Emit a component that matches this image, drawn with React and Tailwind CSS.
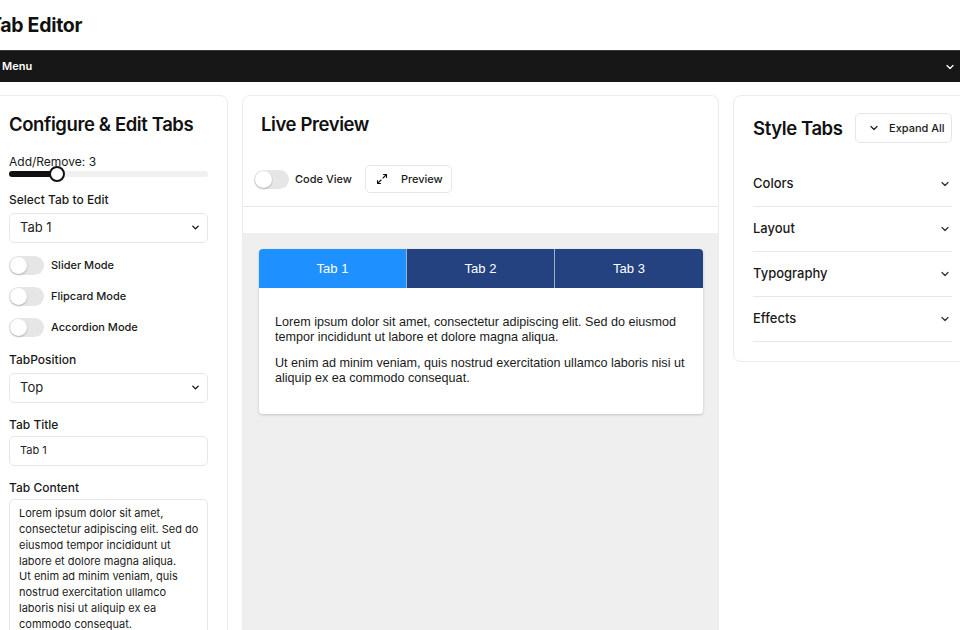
import React from "react";
import { ChevronDown, Maximize2 } from "lucide-react";

function Toggle() {
  return (
    <div className="w-[35px] h-[19px] rounded-full bg-[#e6e6e6] flex items-center px-[1px] shrink-0">
      <div className="w-[17px] h-[17px] rounded-full bg-white shadow-[0_1px_2px_rgba(0,0,0,0.25)]" />
    </div>
  );
}

function SelectBox({ value }) {
  return (
    <div className="h-[30px] w-full rounded-[5px] border border-[#e7e7e7] flex items-center justify-between pl-[10px] pr-[6px] text-[13px] text-[#222]">
      <span>{value}</span>
      <ChevronDown size={11} strokeWidth={3} className="text-[#111]" />
    </div>
  );
}

function AccordionRow({ label }) {
  return (
    <div className="h-[45px] border-b border-[#e8e8e8] flex items-center justify-between text-[13px] font-medium text-[#1a1a1a]">
      <span>{label}</span>
      <ChevronDown size={12} strokeWidth={2.5} className="text-[#333] mr-[1px]" />
    </div>
  );
}

export default function App() {
  return (
    <div className="w-[960px] h-[630px] overflow-hidden bg-white font-['Inter',sans-serif] text-[#111]">
      <div className="ml-[-11px] w-[983px]">
        <div className="h-[50px] pt-[2px] flex items-center">
          <h1 className="text-[19.5px] font-bold tracking-[-0.3px] text-[#111]">Tab Editor</h1>
        </div>
        <div className="h-[32px] bg-[#171717] border-t border-[#3a3a3a] flex items-center justify-between pl-[13px] pr-[16px]">
          <span className="text-[11px] font-semibold text-white">Menu</span>
          <ChevronDown size={12} strokeWidth={2.5} className="text-white" />
        </div>

        <div className="grid grid-cols-[239px_477px_239px] gap-[14px] mt-[13px] items-start">
          {/* Left panel */}
          <div className="h-[560px] rounded-[8px] border border-[#ececec] px-[19px] pt-[14px] flex flex-col">
            <h2 className="text-[18.5px] leading-[28px] font-semibold tracking-[-0.4px]">Configure &amp; Edit Tabs</h2>
            <div className="mt-[17px] text-[12px] leading-[14px] text-[#1a1a1a]">Add/Remove: 3</div>
            <div className="relative h-[10px] flex items-center">
              <div className="w-full h-[6px] rounded-full bg-[#f1f1f1]" />
              <div className="absolute left-0 top-[2px] h-[6px] w-[48px] rounded-l-full bg-[#111]" />
              <div className="absolute left-[40px] top-[-3px] w-[16px] h-[16px] rounded-full bg-white border-2 border-[#111]" />
            </div>
            <div className="mt-[14px] text-[12px] leading-[14px] font-medium text-[#1a1a1a]">Select Tab to Edit</div>
            <div className="mt-[6px]"><SelectBox value="Tab 1" /></div>
            <div className="mt-[13px] flex flex-col gap-[12px]">
              {["Slider Mode", "Flipcard Mode", "Accordion Mode"].map((l) => (
                <div key={l} className="h-[19px] flex items-center gap-[7px]">
                  <Toggle />
                  <span className="text-[11px] font-medium text-[#1a1a1a]">{l}</span>
                </div>
              ))}
            </div>
            <div className="mt-[16px] text-[12px] leading-[14px] font-medium text-[#1a1a1a]">TabPosition</div>
            <div className="mt-[6px]"><SelectBox value="Top" /></div>
            <div className="mt-[15px] text-[12px] leading-[14px] font-medium text-[#1a1a1a]">Tab Title</div>
            <div className="mt-[4px] h-[31px] rounded-[5px] border border-[#e7e7e7] flex items-center pl-[10px] text-[11px] text-[#222]">Tab 1</div>
            <div className="mt-[15px] text-[12px] leading-[14px] font-medium text-[#1a1a1a]">Tab Content</div>
            <div className="mt-[4px] h-[160px] rounded-[5px] border border-[#e7e7e7] pl-[9px] pr-[4px] pt-[6px] text-[11px] leading-[15.9px] text-[#222]">
              Lorem ipsum dolor sit amet, consectetur adipiscing elit. Sed do eiusmod tempor incididunt ut labore et dolore magna aliqua.
              <br />
              Ut enim ad minim veniam, quis nostrud exercitation ullamco laboris nisi ut aliquip ex ea commodo consequat.
            </div>
          </div>

          {/* Middle panel */}
          <div className="h-[560px] rounded-[8px] border border-[#ececec] flex flex-col overflow-hidden">
            <div className="h-[110px] flex flex-col">
              <h2 className="pl-[18px] pt-[14px] text-[18.5px] leading-[28px] font-semibold tracking-[-0.4px]">Live Preview</h2>
              <div className="mt-[27px] pl-[11px] flex items-center">
                <Toggle />
                <span className="ml-[6px] text-[11px] font-medium text-[#1a1a1a]">Code View</span>
                <div className="ml-[13px] h-[28px] w-[87px] rounded-[5px] border border-[#e7e7e7] flex items-center pl-[10px]">
                  <Maximize2 size={12} strokeWidth={2.2} className="text-[#111]" />
                  <span className="ml-[13px] text-[11px] font-medium text-[#1a1a1a]">Preview</span>
                </div>
              </div>
            </div>
            <div className="flex-1 border-t border-[#e8e8e8] flex flex-col">
              <div className="h-[26px] bg-white" />
              <div className="flex-1 bg-[#efefef] pl-[16px] pr-[15px] pt-[16px]">
                <div className="rounded-[4px] bg-white shadow-[0_1px_3px_rgba(0,0,0,0.18)] font-['Liberation_Sans',Arial,sans-serif]">
                  <div className="grid grid-cols-3 h-[39px] rounded-t-[4px] overflow-hidden text-[13px] text-white">
                    <div className="bg-[#1e90ff] flex items-center justify-center border-r border-[#9fb0cc]">Tab 1</div>
                    <div className="bg-[#24427f] flex items-center justify-center border-r border-[#9fb0cc]">Tab 2</div>
                    <div className="bg-[#24427f] flex items-center justify-center">Tab 3</div>
                  </div>
                  <div className="px-[16px] pt-[27px] pb-[29px] text-[12.6px] leading-[14.5px] text-[#1a1a1a]">
                    <p>Lorem ipsum dolor sit amet, consectetur adipiscing elit. Sed do eiusmod tempor incididunt ut labore et dolore magna aliqua.</p>
                    <p className="mt-[12px]">Ut enim ad minim veniam, quis nostrud exercitation ullamco laboris nisi ut aliquip ex ea commodo consequat.</p>
                  </div>
                </div>
              </div>
            </div>
          </div>

          {/* Right panel */}
          <div className="rounded-[8px] border border-[#ececec] px-[19px] pt-[17px] pb-[19px]">
            <div className="flex items-center justify-between">
              <h2 className="text-[18.5px] leading-[28px] font-semibold tracking-[-0.4px]">Style Tabs</h2>
              <div className="h-[30px] w-[97px] rounded-[5px] border border-[#e7e7e7] flex items-center pl-[12px]">
                <ChevronDown size={12} strokeWidth={2.5} className="text-[#222]" />
                <span className="ml-[9px] text-[11px] font-medium text-[#1a1a1a]">Expand All</span>
              </div>
            </div>
            <div className="mt-[19px]">
              <AccordionRow label="Colors" />
              <AccordionRow label="Layout" />
              <AccordionRow label="Typography" />
              <AccordionRow label="Effects" />
            </div>
          </div>
        </div>
      </div>
    </div>
  );
}
